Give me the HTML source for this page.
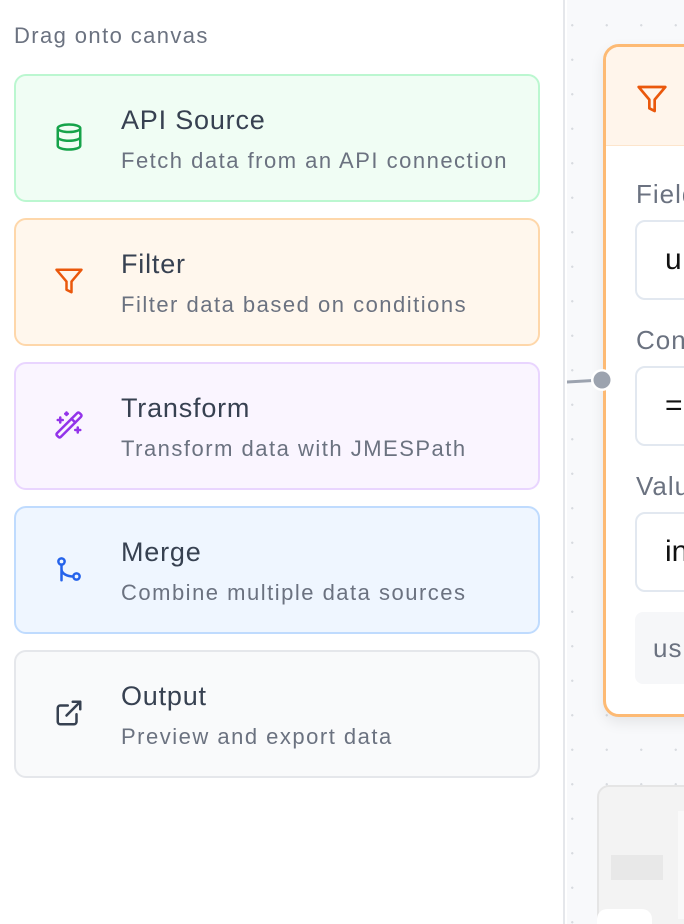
<!DOCTYPE html>
<html><head><style>
*{box-sizing:border-box;margin:0;padding:0}
html,body{width:684px;height:924px;overflow:hidden}
body{background:#fff;font-family:"Liberation Sans",sans-serif;position:relative}
.side{position:absolute;left:0;top:0;width:565px;height:924px;background:#fff;border-right:2px solid #e5e7eb}
.hd{position:absolute;left:14px;top:23px;font-size:22px;letter-spacing:1.4px;color:#6b7280}
.card{position:absolute;left:14px;width:526px;height:128px;border:2px solid;border-radius:12px}
.card svg{position:absolute;left:38px;top:46px}
.t{position:absolute;left:105px;top:29px;font-size:27px;letter-spacing:0.8px;color:#374151}
.s{position:absolute;left:105px;top:72px;font-size:22px;letter-spacing:1.5px;color:#6b7280}
.clip{position:absolute;left:567px;top:0;width:117px;height:924px;overflow:hidden;background-color:#f8f9fb;background-image:radial-gradient(circle,#d8dbe0 1px,transparent 1.3px);background-size:34.5px 34.5px;background-position:-12px 8px}
.node{position:absolute;left:36px;top:44px;width:120px;height:673px;border:3px solid #fdba74;border-radius:16px;background:#fff;overflow:hidden;box-shadow:0 6px 14px rgba(0,0,0,.08)}
.nh{height:99px;background:#fff5eb;border-bottom:1px solid #fde5cc;position:relative}
.lbl{position:absolute;left:30px;font-size:26px;letter-spacing:1px;color:#6b7280}
.inp{position:absolute;left:29px;width:120px;height:80px;border:2px solid #e2e8f0;border-radius:10px;background:#fff;font-size:30px;color:#111;padding:21px 0 0 28px}
</style></head><body>
<div class="side">
<div class="hd">Drag onto canvas</div>
<div class="card" style="top:74px;background:#f0fdf4;border-color:#bbf7d0">
<svg width="30" height="30" viewBox="0 0 24 24" fill="none" stroke="#16a34a" stroke-width="2" stroke-linecap="round"><ellipse cx="12" cy="5" rx="9" ry="3"/><path d="M3 5v14a9 3 0 0 0 18 0V5"/><path d="M3 12a9 3 0 0 0 18 0"/></svg>
<div class="t">API Source</div><div class="s">Fetch data from an API connection</div></div>
<div class="card" style="top:218px;background:#fff7ed;border-color:#fed7aa">
<svg width="30" height="30" viewBox="0 0 24 24" fill="none" stroke="#ea580c" stroke-width="2" stroke-linejoin="round"><path d="M22 3H2l8 9.46V19l4 2v-8.54L22 3z"/></svg>
<div class="t">Filter</div><div class="s">Filter data based on conditions</div></div>
<div class="card" style="top:362px;background:#faf5ff;border-color:#e9d5ff">
<svg width="30" height="30" viewBox="0 0 24 24" fill="none" stroke="#9333ea" stroke-width="2" stroke-linecap="round" stroke-linejoin="round"><path d="m21.64 3.64-1.28-1.28a1.21 1.21 0 0 0-1.72 0L2.36 18.64a1.21 1.21 0 0 0 0 1.72l1.28 1.28a1.2 1.2 0 0 0 1.72 0L21.64 5.36a1.2 1.2 0 0 0 0-1.72"/><path d="m14 7 3 3M5 6v4M19 14v4M10 2v2M7 8H3M21 16h-4M11 3H9"/></svg>
<div class="t">Transform</div><div class="s">Transform data with JMESPath</div></div>
<div class="card" style="top:506px;background:#eff6ff;border-color:#bfdbfe">
<svg width="30" height="30" viewBox="0 0 24 24" fill="none" stroke="#2563eb" stroke-width="2" stroke-linecap="round"><circle cx="6" cy="6" r="2.5"/><circle cx="18" cy="18" r="2.5"/><path d="M6 8.5V21M6 12c0 4 5 6 9.5 6"/></svg>
<div class="t">Merge</div><div class="s">Combine multiple data sources</div></div>
<div class="card" style="top:650px;background:#f9fafb;border-color:#e5e7eb">
<svg width="30" height="30" viewBox="0 0 24 24" fill="none" stroke="#374151" stroke-width="2" stroke-linecap="round" stroke-linejoin="round"><path d="M18 13v6a2 2 0 0 1-2 2H5a2 2 0 0 1-2-2V8a2 2 0 0 1 2-2h6M15 3h6v6M10 14 21 3"/></svg>
<div class="t">Output</div><div class="s">Preview and export data</div></div>
</div>
<div class="clip">
<div class="node">
<div class="nh"><svg style="position:absolute;left:30px;top:36px" width="32" height="32" viewBox="0 0 24 24" fill="none" stroke="#ea580c" stroke-width="2" stroke-linejoin="round"><path d="M22 3H2l8 9.46V19l4 2v-8.54L22 3z"/></svg></div>
<div class="lbl" style="top:132px">Field</div>
<div class="inp" style="top:173px">u</div>
<div class="lbl" style="top:278px">Condition</div>
<div class="inp" style="top:319px">=</div>
<div class="lbl" style="top:424px">Value</div>
<div class="inp" style="top:465px">in</div>
<div style="position:absolute;left:29px;top:565px;width:120px;height:72px;background:#f6f7f9;border-radius:8px;font-size:26px;letter-spacing:1px;color:#6b7280;padding:21px 0 0 18px">us</div>
</div>
<div style="position:absolute;left:30px;top:785px;width:100px;height:150px;background:#f3f3f3;border:2px solid #e5e5e5;border-radius:12px">
<div style="position:absolute;left:12px;top:68px;width:52px;height:25px;background:#e8e8e8"></div>
<div style="position:absolute;left:79px;top:24px;width:20px;height:108px;background:#f9f9f9"></div>
<div style="position:absolute;left:-2px;top:122px;width:55px;height:40px;background:#fff;border-radius:10px"></div>
</div>
<svg style="position:absolute;left:-7px;top:360px" width="60" height="40"><path d="M6 22 L42 20" stroke="#9ca3af" stroke-width="3"/><circle cx="42" cy="20" r="11" fill="#fff"/><circle cx="42" cy="20" r="8.5" fill="#9ca3af"/></svg>
</div>
</body></html>
